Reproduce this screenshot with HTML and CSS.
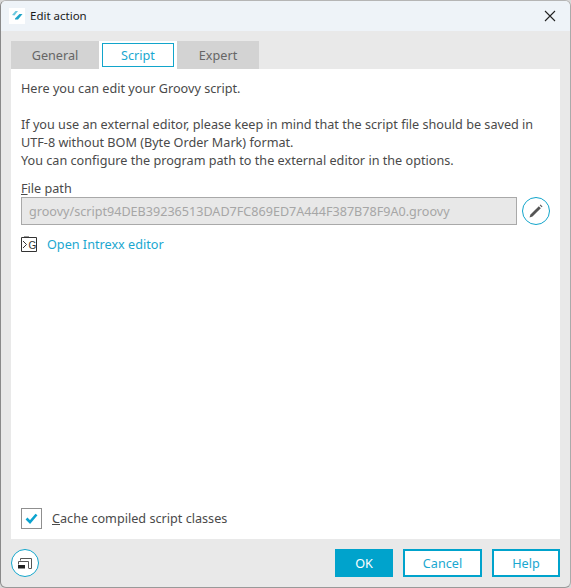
FILE: index.html
```html
<!DOCTYPE html>
<html lang="en">
<head>
    <meta charset="UTF-8">
    <title>Edit action</title>
    <link rel="stylesheet" href="styles.css">
</head>
<body>
    <div class="dialog">
        <div class="titlebar">
            <span class="app-icon">
                <svg width="16" height="16" viewBox="0 0 16 16">
                    <path d="M3 7 L6.5 3 H9 L5.5 7.5 Z" fill="#6cc8de"/>
                    <path d="M6 10.5 L10.5 6 H13.5 L9 11.5 H6 Z" fill="#1fa5c9"/>
                </svg>
            </span>
            <span class="title">Edit action</span>
            <svg class="close" width="12" height="12" viewBox="0 0 12 12">
                <path d="M1 1 L11 11 M11 1 L1 11" stroke="#222" stroke-width="1.1" fill="none"/>
            </svg>
        </div>

        <div class="tabs">
            <div class="tab">General</div>
            <div class="tab tab-active"><span>Script</span></div>
            <div class="tab">Expert</div>
        </div>

        <div class="panel">
            <p class="intro">Here you can edit your Groovy script.</p>
            <p class="intro">If you use an external editor, please keep in mind that the script file should be saved in<br>
            UTF-8 without BOM (Byte Order Mark) format.<br>
            You can configure the program path to the external editor in the options.</p>

            <div class="field-label"><u>F</u>ile path</div>
            <div class="field-row">
                <div class="path-input">groovy/script94DEB39236513DAD7FC869ED7A444F387B78F9A0.groovy</div>
                <div class="round-btn">
                    <svg width="18" height="18" viewBox="0 0 18 18">
                        <path d="M2.5 15.5 L3.5 12.5 L11.8 4.2 L13.8 6.2 L5.5 14.5 Z" fill="#555"/>
                        <path d="M12.7 3.3 L13.5 2.5 L15.5 4.5 L14.7 5.3 Z" fill="#555"/>
                    </svg>
                </div>
            </div>

            <div class="link-row">
                <svg width="16" height="16" viewBox="0 0 16 16">
                    <path d="M.5 1.5 H15.5 V15.5 H.5 Z" fill="#fff" stroke="#333"/>
                    <path d="M3 0 H8 V1 H3 Z" fill="#999"/>
                    <path d="M2 5 L5.5 8.5 L2 12" stroke="#333" fill="none"/>
                    <text x="7.5" y="12.5" class="icon-letter">G</text>
                </svg>
                <span class="link">Open Intrexx editor</span>
            </div>

            <div class="spacer"></div>

            <div class="check-row">
                <div class="checkbox">
                    <svg width="13" height="11" viewBox="0 0 13 11">
                        <path d="M1.5 5.5 L5 9 L11.5 1.5" stroke="#0ba3cf" stroke-width="2.6" fill="none"/>
                    </svg>
                </div>
                <span class="check-label"><u>C</u>ache compiled script classes</span>
            </div>
        </div>

        <div class="footer">
            <div class="round-btn">
                <svg width="14" height="11" viewBox="0 0 14 11">
                    <path d="M2.5 2.5 V.5 H13.5 V10.5 H11" stroke="#555" fill="none"/>
                    <path d="M.5 6.5 V3.5 H10.5 V10.5" stroke="#555" fill="none"/>
                    <path d="M0 7 H7 V10.5 H0 Z" fill="#222"/>
                </svg>
            </div>
            <div class="buttons">
                <div class="btn btn-primary btn-ok">OK</div>
                <div class="btn btn-cancel">Cancel</div>
                <div class="btn btn-help">Help</div>
            </div>
        </div>
    </div>
</body>
</html>
```

FILE: styles.css
```css
html, body {
    margin: 0;
    height: 100%;
    background: #d8d8d8;
}
body {
    font-family: "Noto Sans", "Open Sans", sans-serif;
    font-size: 12.65px;
    line-height: 18px;
    color: #4a4a4a;
}
.dialog {
    box-sizing: border-box;
    width: 571px;
    height: 588px;
    display: flex;
    flex-direction: column;
    background: #e9e9e9;
    border: 1px solid #aaa;
    border-top-color: #b5b5b5;
    border-left-color: #8a8a8a;
    border-bottom-color: #999;
    border-radius: 6px;
    overflow: hidden;
}
.titlebar {
    height: 30px;
    flex: none;
    display: flex;
    align-items: center;
    padding: 0 14px 0 8px;
    background: #eef3f8;
    color: #1a1a1a;
    font-size: 11.5px;
}
.app-icon {
    width: 16px;
    height: 16px;
    background: #fff;
    margin-right: 5px;
}
.app-icon svg {
    display: block;
}
.title {
    flex: 1;
}
.tabs {
    display: flex;
    margin: 10px 0 0 10px;
    height: 28px;
    flex: none;
}
.tab {
    box-sizing: border-box;
    background: #d3d3d3;
    color: #666;
    text-align: center;
    line-height: 28px;
    width: 88px;
}
.tab-active {
    width: 78px;
    background: #fff;
    color: #1aa7d0;
    padding: 2px 3px 0;
    line-height: 22px;
}
.tab-active span {
    display: block;
    height: 24px;
    box-sizing: border-box;
    border: 1px solid #12a5cb;
}
.tab:last-child {
    width: 82px;
}
.panel {
    flex: 1;
    display: flex;
    flex-direction: column;
    margin: 0 10px;
    padding: 10px 10px 10px;
    background: #fff;
}
.intro {
    margin: 0 0 18px;
}
.intro + .intro {
    margin-bottom: 9px;
}
.field-label {
    height: 18px;
    margin-top: 1px;
}
.field-row {
    display: flex;
    gap: 5px;
}
.path-input {
    flex: 1;
    box-sizing: border-box;
    height: 28px;
    font-size: 12.6px;
    line-height: 27px;
    padding-left: 7px;
    border: 1px solid #a9a9a9;
    background: #e8e8e8;
    color: #a6a6a6;
}
.round-btn {
    box-sizing: border-box;
    width: 28px;
    height: 28px;
    flex: none;
    display: flex;
    align-items: center;
    justify-content: center;
    border: 1px solid #12a5cb;
    border-radius: 50%;
    background: #fff;
}
.link-row {
    display: flex;
    align-items: flex-start;
    gap: 10px;
    margin-top: 10px;
}
.link-row svg {
    display: block;
    margin-top: 1px;
}
.icon-letter {
    font-family: "Liberation Sans", sans-serif;
    font-size: 10px;
    fill: #333;
}
.link {
    color: #1aa7d0;
}
.spacer {
    flex: 1;
}
.check-row {
    display: flex;
    align-items: center;
    gap: 10px;
}
.check-label {
    padding-bottom: 2px;
}
.checkbox {
    box-sizing: border-box;
    width: 21px;
    height: 21px;
    display: flex;
    align-items: center;
    justify-content: center;
    border: 1px solid #8f8f8f;
    background: #fff;
}
.footer {
    flex: none;
    height: 48px;
    display: flex;
    align-items: center;
    justify-content: space-between;
    padding: 0 10px;
}
.buttons {
    display: flex;
    gap: 10px;
}
.btn {
    box-sizing: border-box;
    height: 28px;
    line-height: 24px;
    text-align: center;
    border: 2px solid #00a3cc;
    background: #fff;
    color: #1aa7d0;
}
.btn-primary {
    background: #00a3cc;
    color: #fff;
}
.btn-ok {
    width: 58px;
}
.btn-cancel {
    width: 79px;
}
.btn-help {
    width: 68px;
}
```
